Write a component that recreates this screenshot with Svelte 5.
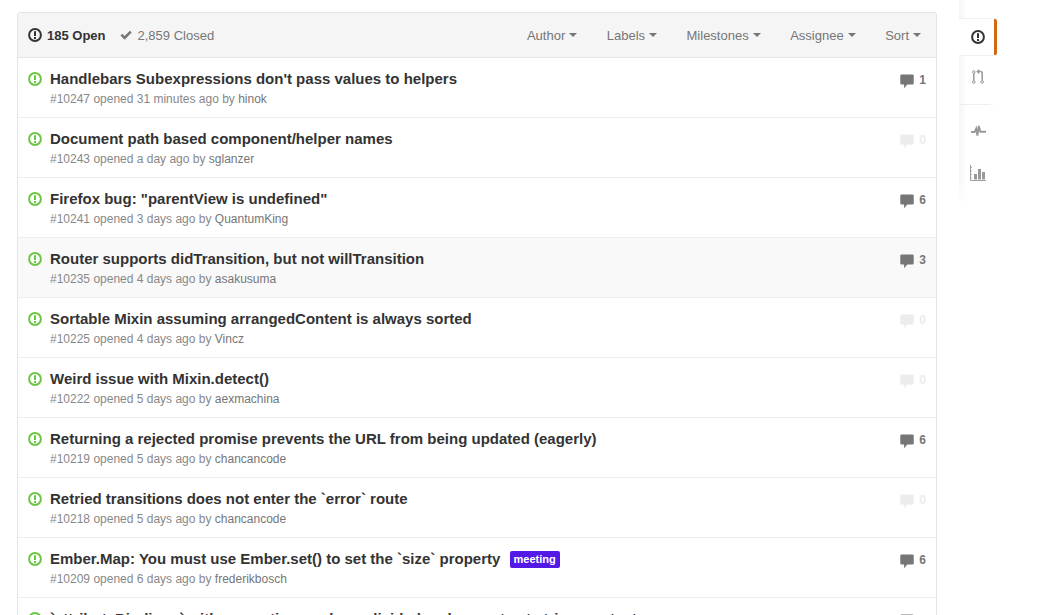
<script>
  const filters = ["Author", "Labels", "Milestones", "Assignee", "Sort"];

  const issues = [
    { title: "Handlebars Subexpressions don't pass values to helpers", num: 10247, when: "31 minutes ago", by: "hinok", comments: 1 },
    { title: "Document path based component/helper names", num: 10243, when: "a day ago", by: "sglanzer", comments: 0 },
    { title: 'Firefox bug: "parentView is undefined"', num: 10241, when: "3 days ago", by: "QuantumKing", comments: 6 },
    { title: "Router supports didTransition, but not willTransition", num: 10235, when: "4 days ago", by: "asakusuma", comments: 3, hover: true },
    { title: "Sortable Mixin assuming arrangedContent is always sorted", num: 10225, when: "4 days ago", by: "Vincz", comments: 0 },
    { title: "Weird issue with Mixin.detect()", num: 10222, when: "5 days ago", by: "aexmachina", comments: 0 },
    { title: "Returning a rejected promise prevents the URL from being updated (eagerly)", num: 10219, when: "5 days ago", by: "chancancode", comments: 6 },
    { title: "Retried transitions does not enter the `error` route", num: 10218, when: "5 days ago", by: "chancancode", comments: 0 },
    { title: "Ember.Map: You must use Ember.set() to set the `size` property", num: 10209, when: "6 days ago", by: "frederikbosch", comments: 6, label: "meeting" },
    { title: "`attributeBindings` with a question mark are divided and cannot set strings as text", num: 10201, when: "6 days ago", by: "rwjblue", comments: 2 }
  ];
</script>

{#snippet issueIcon(cls)}
  <svg class={cls} viewBox="0 0 14 14" aria-hidden="true">
    <circle cx="7" cy="7" r="5.9" fill="none" stroke="currentColor" stroke-width="2" />
    <rect x="6" y="3.2" width="2" height="4.8" fill="currentColor" />
    <rect x="6" y="9" width="2" height="2" fill="currentColor" />
  </svg>
{/snippet}

<div class="page">
  <main class="issues">
    <header class="toolbar">
      <div class="states">
        <span class="state open">{@render issueIcon("state-icon")}185 Open</span>
        <span class="state closed">
          <svg class="check" viewBox="0 0 12 12" aria-hidden="true">
            <path d="M0.5 6.6 L2.3 4.8 L4.6 7.1 L9.9 1.8 L11.7 3.6 L4.6 10.7 Z" fill="currentColor" />
          </svg>
          2,859 Closed
        </span>
      </div>
      <nav class="filters">
        {#each filters as f}
          <span class="filter">{f}<i class="caret"></i></span>
        {/each}
      </nav>
    </header>

    {#each issues as issue}
      <article class="row" class:hover={issue.hover}>
        {@render issueIcon("row-icon")}
        <div class="body">
          <div class="title">
            {issue.title}
            {#if issue.label}<span class="label">{issue.label}</span>{/if}
          </div>
          <div class="meta">#{issue.num} opened {issue.when} by <span class="author">{issue.by}</span></div>
        </div>
        <div class="comments" class:none={issue.comments === 0}>
          <svg class="bubble" viewBox="0 0 15 15" preserveAspectRatio="none" aria-hidden="true">
            <path d="M1.6 0.5 H13.4 Q14.7 0.5 14.7 1.8 V9.2 Q14.7 10.5 13.4 10.5 H7.8 L4.4 14.2 V10.5 H1.6 Q0.3 10.5 0.3 9.2 V1.8 Q0.3 0.5 1.6 0.5 Z" fill="currentColor" />
          </svg>
          <span class="count">{issue.comments}</span>
        </div>
      </article>
    {/each}
  </main>

  <aside class="sidenav">
    <div class="side-top">
      <div class="side-item active">{@render issueIcon("side-issue")}</div>
      <div class="side-item pulls">
        <svg class="side-pr" viewBox="0 0 12 15" aria-hidden="true">
          <g fill="none" stroke="currentColor">
            <circle cx="1.8" cy="3" r="1.3" />
            <circle cx="1.8" cy="13" r="1.3" />
            <circle cx="10.2" cy="13" r="1.3" />
            <path d="M1.8 4.3 V11.7" stroke-width="1.5" />
            <path d="M10.2 11.7 V4.6 Q10.2 2.6 8.2 2.6 H7" stroke-width="1.5" />
          </g>
          <path d="M7.2 0 V5.2 L4.2 2.6 Z" fill="currentColor" />
        </svg>
      </div>
    </div>
    <div class="side-bottom">
      <div class="side-item">
        <svg class="side-pulse" viewBox="0 0 15 12" aria-hidden="true">
          <path d="M0 7 H3.6 L5.2 3.6 L6.4 10.6 L7.8 1 L9.4 6.8 H15" fill="none" stroke="currentColor" stroke-width="1.9" />
        </svg>
      </div>
      <div class="side-item">
        <svg class="side-graph" viewBox="0 0 16 16" aria-hidden="true">
          <path d="M0.5 0 V15.5 H16" fill="none" stroke="currentColor" stroke-width="0.9" />
          <path d="M0 2.5 H2 M0 6 H2 M0 9.5 H2 M0 13 H2" stroke="currentColor" stroke-width="0.8" />
          <rect x="4" y="9" width="3" height="5.5" fill="currentColor" />
          <rect x="8" y="4" width="3" height="10.5" fill="currentColor" />
          <rect x="12" y="7" width="3" height="7.5" fill="currentColor" />
        </svg>
      </div>
    </div>
  </aside>
</div>

<style>
  :global(body) {
    margin: 0;
    background: #fff;
    overflow: hidden;
  }

  .page {
    height: 615px;
    overflow: hidden;
    display: flex;
    align-items: flex-start;
    padding-left: 17px;
    gap: 22px;
    font-family: "Liberation Sans", Arial, sans-serif;
    color: #333;
  }

  .issues {
    width: 920px;
    flex: none;
    box-sizing: border-box;
    margin-top: 12px;
    border: 1px solid #e5e5e5;
    border-radius: 3px;
  }

  .toolbar {
    height: 44px;
    display: flex;
    align-items: center;
    justify-content: space-between;
    padding: 0 15px 0 10px;
    background: #f5f5f5;
    border-bottom: 1px solid #e5e5e5;
    font-size: 13px;
  }

  .states {
    display: flex;
    gap: 14px;
  }

  .state {
    display: flex;
    align-items: center;
    gap: 5px;
  }

  .open {
    font-weight: bold;
    color: #333;
  }

  .closed {
    color: #767676;
    font-size: 13px;
  }

  .state-icon {
    width: 14px;
    height: 14px;
    color: #333;
  }

  .check {
    width: 12px;
    height: 12px;
    color: #767676;
    margin-right: 1px;
  }

  .filters {
    display: flex;
    gap: 29.5px;
    color: #767676;
  }

  .filter {
    display: flex;
    align-items: center;
    gap: 4px;
  }

  .caret {
    width: 0;
    height: 0;
    border-style: solid;
    border-width: 4px 4px 0;
    border-color: #767676 transparent transparent;
  }

  .row {
    height: 59px;
    display: flex;
    align-items: flex-start;
    padding: 0 10px;
    border-bottom: 1px solid #eee;
    background: #fff;
  }

  .row.hover {
    background: #f9f9f9;
  }

  .row-icon {
    width: 14px;
    height: 14px;
    margin-top: 14px;
    flex: none;
    color: #6cc644;
  }

  .body {
    flex: 1;
    margin-left: 8px;
    min-width: 0;
  }

  .title {
    margin-top: 11px;
    font-size: 15px;
    line-height: 20px;
    font-weight: bold;
    color: #333;
    white-space: nowrap;
  }

  .label {
    display: inline-block;
    margin-left: 5px;
    padding: 0 4px;
    font-size: 11px;
    line-height: 17px;
    height: 17px;
    vertical-align: 1px;
    border-radius: 2px;
    background: #5319e7;
    color: #fff;
  }

  .meta {
    margin-top: 2px;
    font-size: 12px;
    line-height: 16px;
    color: #888;
  }

  .author {
    color: #767676;
  }

  .comments {
    display: flex;
    align-items: center;
    gap: 5px;
    margin-top: 15px;
    font-size: 12px;
    line-height: 14px;
    font-weight: bold;
    color: #767676;
  }

  .comments.none {
    color: #ececec;
  }

  .count {
    margin-bottom: 2px;
  }

  .bubble {
    width: 14px;
    height: 15px;
  }

  .sidenav {
    width: 38px;
    height: 210px;
    flex: none;
    box-sizing: border-box;
    padding-top: 19px;
    background:
      linear-gradient(to bottom, transparent 175px, #fff 208px),
      linear-gradient(to right, #f5f5f5, #fff 8px);
  }

  .side-top {
    background: linear-gradient(to right, #eee, #eee 70%, transparent) bottom / 100% 1px no-repeat;
    height: 86px;
  }

  .side-bottom {
    display: flex;
    flex-direction: column;
    gap: 6px;
    padding-top: 8px;
  }

  .side-item {
    height: 36px;
    display: flex;
    align-items: center;
    padding-left: 12px;
    color: #999;
    box-sizing: border-box;
  }

  .side-item.active {
    color: #333;
    background: #fff;
    border-right: 3px solid #d26911;
    border-radius: 0 2px 2px 0;
    box-shadow: 0 -1px 0 #f0f0f0, 0 1px 0 #f0f0f0;
  }

  .side-item.pulls {
    height: 49px;
    align-items: flex-start;
    padding: 14px 0 0 13px;
  }

  .side-issue {
    width: 14px;
    height: 14px;
  }

  .side-pr {
    width: 12px;
    height: 15px;
  }

  .side-pulse {
    width: 15px;
    height: 12px;
  }

  .side-graph {
    width: 16px;
    height: 16px;
    margin-left: -1px;
  }
</style>
